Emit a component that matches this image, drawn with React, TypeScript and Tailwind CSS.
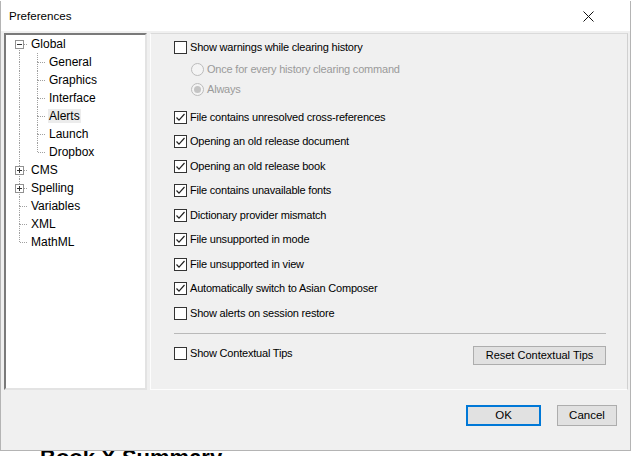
import React from "react";

type Conn = { up?: boolean; down?: boolean; right?: boolean; box?: "plus" | "minus" };

function Connector({ up, down, right, box }: Conn) {
  return (
    <svg width="18" height="18" viewBox="0 0 18 18" className="shrink-0" shapeRendering="crispEdges">
      {up && <line x1="9.5" y1="0" x2="9.5" y2="9" stroke="#a0a0a0" strokeDasharray="1 1" />}
      {down && <line x1="9.5" y1="9" x2="9.5" y2="18" stroke="#a0a0a0" strokeDasharray="1 1" />}
      {right && <line x1="10" y1="9.5" x2="19" y2="9.5" stroke="#a0a0a0" strokeDasharray="1 1" />}
      {box && (
        <g>
          <rect x="5.5" y="5.5" width="8" height="8" fill="#fff" stroke="#919191" />
          <line x1="7" y1="9.5" x2="12" y2="9.5" stroke="#333" />
          {box === "plus" && <line x1="9.5" y1="7" x2="9.5" y2="12" stroke="#333" />}
        </g>
      )}
    </svg>
  );
}

type TreeRow = { label: string; cells: Conn[]; selected?: boolean };

const tree: TreeRow[] = [
  { label: "Global", cells: [{ down: true, right: true, box: "minus" }] },
  { label: "General", cells: [{ up: true, down: true }, { up: true, down: true, right: true }] },
  { label: "Graphics", cells: [{ up: true, down: true }, { up: true, down: true, right: true }] },
  { label: "Interface", cells: [{ up: true, down: true }, { up: true, down: true, right: true }] },
  { label: "Alerts", cells: [{ up: true, down: true }, { up: true, down: true, right: true }], selected: true },
  { label: "Launch", cells: [{ up: true, down: true }, { up: true, down: true, right: true }] },
  { label: "Dropbox", cells: [{ up: true, down: true }, { up: true, right: true }] },
  { label: "CMS", cells: [{ up: true, down: true, right: true, box: "plus" }] },
  { label: "Spelling", cells: [{ up: true, down: true, right: true, box: "plus" }] },
  { label: "Variables", cells: [{ up: true, down: true, right: true }] },
  { label: "XML", cells: [{ up: true, down: true, right: true }] },
  { label: "MathML", cells: [{ up: true, right: true }] },
];

function Checkbox({ checked }: { checked?: boolean }) {
  return (
    <div className="w-[13px] h-[13px] border border-[#333333] bg-white shrink-0 flex items-center justify-center">
      {checked && (
        <svg width="11" height="11" viewBox="0 0 11 11">
          <polyline points="1.5,5.5 4,8.2 9.5,2" fill="none" stroke="#222" strokeWidth="1.2" />
        </svg>
      )}
    </div>
  );
}

function Radio({ checked }: { checked?: boolean }) {
  return (
    <div className="w-[13px] h-[13px] rounded-full border border-[#bcbcbc] bg-[#f4f4f4] shrink-0 flex items-center justify-center">
      {checked && <div className="w-[7px] h-[7px] rounded-full bg-[#c4c4c4]" />}
    </div>
  );
}

const alerts: { label: string; checked: boolean }[] = [
  { label: "File contains unresolved cross-references", checked: true },
  { label: "Opening an old release document", checked: true },
  { label: "Opening an old release book", checked: true },
  { label: "File contains unavailable fonts", checked: true },
  { label: "Dictionary provider mismatch", checked: true },
  { label: "File unsupported in mode", checked: true },
  { label: "File unsupported in view", checked: true },
  { label: "Automatically switch to Asian Composer", checked: true },
  { label: "Show alerts on session restore", checked: false },
];

export default function App() {
  return (
    <div className="w-[631px] h-[456px] bg-white overflow-hidden font-['Liberation_Sans',Arial,sans-serif] text-[12px] text-black">
      <div className="h-[1px]" />
      <div className="h-[450px] flex flex-col border border-[#b4b4b4] border-t-0">
        {/* title bar */}
        <div className="h-[30px] bg-white flex items-center justify-between pl-[8px] pr-[36px]">
          <span className="text-[11.6px]">Preferences</span>
          <svg width="11" height="11" viewBox="0 0 11 11">
            <path d="M0.5 0.5 L10.5 10.5 M10.5 0.5 L0.5 10.5" stroke="#111" strokeWidth="1" />
          </svg>
        </div>

        <div className="flex-1 bg-[#f0f0f0] flex flex-col pt-[2px] pl-[3px] pr-[2px]">
          <div className="flex gap-[3px] h-[357px]">
            {/* tree */}
            <div className="w-[143px] bg-white border-2 border-t-[#7a7a7a] border-l-[#7a7a7a] border-r-[#e3e3e3] border-b-[#e3e3e3] pl-[4px]">
              {tree.map((r) => (
                <div key={r.label} className="h-[18px] flex items-center">
                  {r.cells.map((c, i) => (
                    <Connector key={i} {...c} />
                  ))}
                  <span className={`ml-[2px] px-[1px] leading-[14px] ${r.selected ? "bg-[#ececec]" : ""}`}>{r.label}</span>
                </div>
              ))}
            </div>

            {/* alerts panel */}
            <div className="flex-1 border border-t-[#dadada] border-l-[#fdfdfd] border-r-[#d0d0d0] border-b-[#fdfdfd] pl-[23px] pr-[21px] pt-[3px] flex flex-col text-[11px] tracking-[-0.2px]">
              <div className="h-[20px] flex items-center gap-[3px]">
                <Checkbox />
                <span>Show warnings while clearing history</span>
              </div>
              <div className="h-[20px] mt-[2px] pl-[17px] flex items-center gap-[3px] text-[#9a9a9a]">
                <Radio />
                <span>Once for every history clearing command</span>
              </div>
              <div className="h-[20px] pl-[17px] flex items-center gap-[3px] text-[#9a9a9a]">
                <Radio checked />
                <span>Always</span>
              </div>
              <div className="mt-[8px] flex flex-col gap-[4.5px]">
                {alerts.map((a) => (
                  <div key={a.label} className="h-[20px] flex items-center gap-[3px]">
                    <Checkbox checked={a.checked} />
                    <span>{a.label}</span>
                  </div>
                ))}
              </div>
              <div className="mt-[10px] h-[1px] bg-[#b9b9b9]" />
              <div className="mt-[9px] h-[20px] flex items-center justify-between">
                <div className="flex items-center gap-[3px]">
                  <Checkbox />
                  <span>Show Contextual Tips</span>
                </div>
                <button className="w-[133px] h-[19px] mt-[5px] border border-[#adadad] bg-[#e1e1e1] flex items-center justify-center tracking-normal">
                  Reset Contextual Tips
                </button>
              </div>
            </div>
          </div>

          {/* footer */}
          <div className="flex justify-end gap-[16px] pr-[11px] mt-[15px] text-[11.5px]">
            <button className="w-[75px] h-[21px] border-2 border-[#0078d7] bg-[#e1e1e1] flex items-center justify-center">
              OK
            </button>
            <button className="w-[60px] h-[21px] border border-[#adadad] bg-[#e1e1e1] flex items-center justify-center">
              Cancel
            </button>
          </div>
        </div>
      </div>
      <div className="h-[5px] overflow-hidden pl-[40px]">
        <div className="font-bold text-[22px] leading-[14px] text-black">Book X Summary</div>
      </div>
    </div>
  );
}
